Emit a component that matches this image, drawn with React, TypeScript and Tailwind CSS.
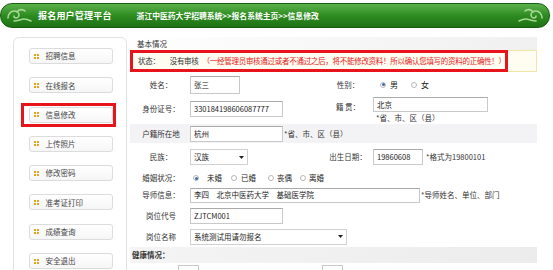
import React from "react"

const menu = ["招聘信息", "在线报名", "信息修改", "上传照片", "修改密码", "准考证打印", "成绩查询", "安全退出"]

function Cloud({ flip }: { flip?: boolean }) {
  return (
    <svg width="28" height="20" viewBox="0 0 28 20" className={flip ? "-scale-x-100" : ""}>
      <g fill="none" stroke="#a8d896" strokeWidth="1.6" strokeLinecap="round">
        <path d="M3 12c0-4 3-7 6-7s5 2 5 4-2 3-3 3-2-1-2-2" />
        <path d="M9 15c4 0 7-2 10-2s5 1 7 2" />
        <path d="M12 6c2-3 6-3 8-1" />
      </g>
    </svg>
  )
}

function Dots() {
  return (
    <span className="grid grid-cols-2 gap-[1px]">
      <i className="block h-[2px] w-[2px] bg-[#e2a31c]" />
      <i className="block h-[2px] w-[2px] bg-[#e2a31c]" />
      <i className="block h-[2px] w-[2px] bg-[#e2a31c]" />
      <i className="block h-[2px] w-[2px] bg-[#e2a31c]" />
    </span>
  )
}

function Radio({ on }: { on?: boolean }) {
  return (
    <span className="flex h-[6px] w-[6px] items-center justify-center rounded-full border border-[#b8b8b8] bg-white">
      {on && <span className="h-[3px] w-[3px] rounded-full bg-[#3a6ea5]" />}
    </span>
  )
}

function Arrow() {
  return (
    <svg width="5" height="3" viewBox="0 0 5 3" className="ml-auto mr-[3px]">
      <path d="M0 0h5L2.5 3z" fill="#222" />
    </svg>
  )
}

function Input({ w, value, h = "h-[16px]" }: { w: string; value?: string; h?: string }) {
  return (
    <div className={`${w} ${h} flex items-center border border-[#c9c9c9] border-t-[#a9a9a9] bg-white px-[3px] text-[#222]`}>
      {value}
    </div>
  )
}

function Select({ w, value }: { w: string; value: string }) {
  return (
    <div className={`${w} flex h-[16px] items-center border border-[#d0d0d0] bg-white pl-[3px] text-[#222]`}>
      {value}
      <Arrow />
    </div>
  )
}

export default function App() {
  return (
    <div className="relative h-[270px] w-[553px] overflow-hidden bg-white font-['Noto_Sans_CJK_SC',sans-serif] text-[7.5px] leading-none text-[#333]">
      <div className="mt-[3px] flex h-[25px] w-[550px] items-center rounded-[12px] border border-[#1b5c13] bg-gradient-to-b from-[#5bb24a] via-[#2d8c20] to-[#1e7215] text-white">
        <div className="ml-[4px]">
          <Cloud />
        </div>
        <span className="ml-[5px] text-[9px] font-bold tracking-[0.2px]">报名用户管理平台</span>
        <span className="ml-[25px] text-[7.8px] font-bold">浙江中医药大学招聘系统&gt;&gt;报名系统主页&gt;&gt;信息修改</span>
        <div className="ml-auto mr-[4px]">
          <Cloud flip />
        </div>
      </div>

      <div className="mt-[9px] flex">
        <aside className="ml-[13px] flex h-[240px] w-[114px] flex-col items-center gap-[13.3px] rounded-[6px] border border-[#e2e2e2] pt-[10px]">
          {menu.map((m) => (
            <div
              key={m}
              className="relative ml-[1px] flex h-[16px] w-[84px] items-center gap-[7px] rounded-[3px] border border-[#dcdcdc] bg-gradient-to-b from-white to-[#f6f6f6] pl-[4px] text-[#444]"
            >
              <Dots />
              <span>{m}</span>
              {m === "信息修改" && (
                <span className="absolute -bottom-[5px] -left-[9px] -right-[4px] -top-[5px] border-[3px] border-[#e8141b]" />
              )}
            </div>
          ))}
        </aside>

        <main className="flex w-[410px] flex-col">
          <div className="ml-[3px] flex h-[13px] items-center bg-gradient-to-r from-white via-[#f7f7f7] to-[#f0f0f0] pl-[7px] text-[#333]">
            基本情况
          </div>

          <div className="relative ml-[3px] flex h-[22px] items-center border border-[#f1e6a8] bg-[#fffdf1] pl-[7px] tracking-[-0.28px]">
            <span>状态：</span>
            <span className="ml-[10px]">没有审核</span>
            <span className="ml-[4px] text-[#e51a1a]">
              （一经管理员审核通过或者不通过之后，将不能修改资料！所以确认您填写的资料的正确性！）
            </span>
            <span className="absolute -left-[1px] top-[-1px] h-[22px] w-[378px] border-[3.5px] border-[#e8141b]" />
          </div>

          <div className="mt-[2px] flex h-[21px] items-center">
            <div className="ml-[5px] w-[58px] text-center">姓名：</div>
            <div className="w-[133px]">
              <Input w="w-[50px]" h="h-[18px]" value="张三" />
            </div>
            <div className="w-[50px] text-center">性别：</div>
            <div className="ml-[7px] flex items-center gap-[4px]">
              <Radio on />
              <span className="text-[8px] text-[#222]">男</span>
              <span className="ml-[5px]" />
              <Radio />
              <span className="text-[8px] text-[#222]">女</span>
            </div>
          </div>

          <div className="flex h-[28px]">
            <div className="ml-[5px] flex w-[58px] items-center justify-center">身份证号：</div>
            <div className="flex w-[133px] items-center">
              <Input w="w-[93px]" value="330184198606087777" />
            </div>
            <div className="mt-[8px] w-[50px] text-center">籍 贯：</div>
            <div className="flex flex-col pt-[2px]">
              <Input w="w-[115px]" h="h-[15px]" value="北京" />
              <span className="ml-[3px] mt-[2px]">*省、市、区（县）</span>
            </div>
          </div>

          <div className="ml-[3px] mt-[1px] flex h-[19px] items-center bg-[#f3f3f5]">
            <div className="ml-[2px] w-[58px] text-center">户籍所在地</div>
            <Input w="w-[93px]" value="杭州" />
            <span className="ml-[1px]">*省、市、区（县）</span>
          </div>

          <div className="mt-[2px] flex h-[24px] items-center">
            <div className="ml-[5px] w-[58px] text-center">民族：</div>
            <div className="w-[133px]">
              <Select w="w-[58px]" value="汉族" />
            </div>
            <div className="w-[50px] text-center">出生日期：</div>
            <Input w="w-[50px]" value="19860608" />
            <span className="ml-[3px]">*格式为19800101</span>
          </div>

          <div className="flex h-[18px] items-center">
            <div className="ml-[5px] w-[58px] text-center">婚姻状况：</div>
            <div className="ml-[3px] flex items-center text-[#222]">
              <Radio on />
              <span className="ml-[8px]">未婚</span>
              <span className="ml-[9px]" />
              <Radio />
              <span className="ml-[4px]">已婚</span>
              <span className="ml-[12px]" />
              <Radio />
              <span className="ml-[3px]">丧偶</span>
              <span className="ml-[8px]" />
              <Radio />
              <span className="ml-[3px]">离婚</span>
            </div>
          </div>

          <div className="flex h-[16px] items-center">
            <div className="ml-[5px] w-[58px] text-center">导师信息：</div>
            <Input w="w-[230px]" h="h-[15px]" value="李四　北京中医药大学　基础医学院" />
            <span className="ml-[1px]">*导师姓名、单位、部门</span>
          </div>

          <div className="flex h-[23px] items-center pt-[2px]">
            <div className="ml-[5px] w-[58px] text-center">岗位代号</div>
            <Input w="w-[93px]" value="ZJTCM001" />
          </div>

          <div className="flex h-[21px] items-center">
            <div className="ml-[5px] w-[58px] text-center">岗位名称</div>
            <Select w="w-[157px]" value="系统测试用请勿报名" />
          </div>

          <div className="ml-[3px] flex h-[16px] items-center bg-gradient-to-r from-[#f4f4f4] to-[#ececec] pl-[2px] font-bold text-[#333]">
            健康情况：
          </div>

          <div className="mt-[2px] flex h-[10px]">
            <div className="ml-[51px] h-[10px] w-[21px] border border-[#c9c9c9]" />
            <div className="ml-[123px] h-[10px] w-[21px] border border-[#c9c9c9]" />
          </div>
        </main>
      </div>
    </div>
  )
}
